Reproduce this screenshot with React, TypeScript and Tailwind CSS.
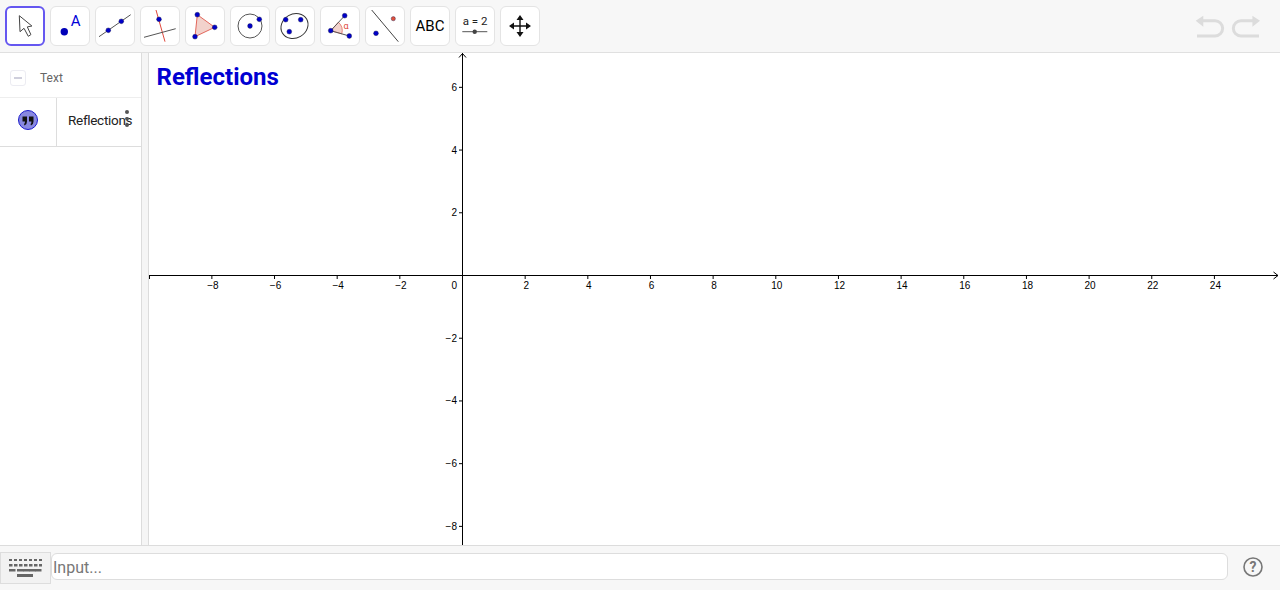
const XTICKS = [-8, -6, -4, -2, 2, 4, 6, 8, 10, 12, 14, 16, 18, 20, 22, 24];
const YTICKS = [6, 4, 2, -2, -4, -6, -8];

const sx = (v: number) => 313.5 + v * 31.33;
const sy = (v: number) => 222.5 - v * 31.36;
const label = (v: number) => (v < 0 ? `\u2212${-v}` : `${v}`);

function Dot({ x, y, r = 2.4, fill = '#0000c8' }: { x: number; y: number; r?: number; fill?: string }) {
  return <circle cx={x} cy={y} r={r} fill={fill} stroke="#1a1a4a" strokeWidth="0.4" />;
}

const ICONS = [
  <path d="M14.3 9.7 L15 25.7 L19 22.3 L23.3 30.3 L25.9 28.6 L22.3 20.9 L26.9 20 Z" fill="#fff" stroke="#444" strokeWidth="1" strokeLinejoin="round" />,
  <>
    <circle cx="14.3" cy="25.7" r="3.7" fill="#0000b8" />
    <text x="25.7" y="20" textAnchor="middle" fontSize="15" fill="#0000d8" fontFamily="Roboto, sans-serif">A</text>
  </>,
  <>
    <line x1="4" y1="30.7" x2="35.7" y2="8.7" stroke="#555" strokeWidth="1" />
    <Dot x={13.3} y={24.3} />
    <Dot x={26.3} y={15.3} />
  </>,
  <>
    <line x1="16" y1="4" x2="25" y2="35.7" stroke="#e0483c" strokeWidth="1" />
    <line x1="4" y1="31.3" x2="35.7" y2="22.7" stroke="#555" strokeWidth="1" />
    <Dot x={19} y={13.3} />
  </>,
  <>
    <polygon points="12.3,8.7 29.7,21.3 10,30.7" fill="#f2d2cc" stroke="#e0584c" strokeWidth="0.9" />
    <Dot x={12.3} y={8.7} />
    <Dot x={29.7} y={21.3} />
    <Dot x={10} y={30.7} />
  </>,
  <>
    <circle cx="20" cy="20" r="12" fill="none" stroke="#555" strokeWidth="1" />
    <Dot x={20} y={20} />
    <Dot x={29.3} y={13.3} />
  </>,
  <>
    <ellipse cx="19.5" cy="20" rx="14" ry="12" fill="none" stroke="#333" strokeWidth="1" transform="rotate(-30 19.5 20)" />
    <Dot x={10.7} y={13.7} />
    <Dot x={25.7} y={13.7} />
    <Dot x={14.3} y={25.7} />
  </>,
  <>
    <path d="M10.7 24.7 L18.4 16.2 A11.5 11.5 0 0 1 21.8 27.8 Z" fill="#f2d2cc" stroke="#e0584c" strokeWidth="0.7" />
    <line x1="10.7" y1="24.7" x2="24.7" y2="9.7" stroke="#555" strokeWidth="1" />
    <line x1="10.7" y1="24.7" x2="29.3" y2="30" stroke="#555" strokeWidth="1" />
    <text x="26" y="22.5" textAnchor="middle" fontSize="9" fill="#e0483c" fontFamily="Roboto, sans-serif">α</text>
    <Dot x={10.7} y={24.7} />
    <Dot x={24.7} y={9.7} />
    <Dot x={29.3} y={30} />
  </>,
  <>
    <line x1="6.7" y1="4" x2="33.3" y2="35.7" stroke="#444" strokeWidth="1" />
    <Dot x={28.3} y={12.7} r={2.1} fill="#e0503c" />
    <Dot x={11} y={27.3} />
  </>,
  <text x="20" y="25" textAnchor="middle" fontSize="15" fill="#000" fontFamily="Roboto, sans-serif">ABC</text>,
  <>
    <text x="20" y="19.3" textAnchor="middle" fontSize="11.5" fill="#222" fontFamily="Roboto, sans-serif">a = 2</text>
    <line x1="7.3" y1="25.7" x2="32.3" y2="25.7" stroke="#555" strokeWidth="1" />
    <circle cx="19.7" cy="25.7" r="2.2" fill="#444" />
  </>,
  <>
    <path d="M20 12 V28 M12 20 H28" stroke="#111" strokeWidth="1.4" />
    <path d="M20 9 L23.5 14 H16.5 Z M20 31 L23.5 26 H16.5 Z M9 20 L14 16.5 V23.5 Z M31 20 L26 16.5 V23.5 Z" fill="#111" />
  </>,
];

function Toolbar() {
  return (
    <div className="flex h-[53px] shrink-0 items-start justify-between border-b border-[#e0e0e0] bg-[#f7f7f7] pl-[5px] pt-[6px]">
      <div className="flex gap-[5px]">
        {ICONS.map((icon, i) => (
          <button
            key={i}
            className={
              i === 0
                ? 'size-10 rounded-[6px] border-2 border-[#6557f0] bg-white'
                : 'size-10 rounded-[6px] border border-[#e4e4e4] bg-white'
            }
          >
            <svg viewBox={i === 0 ? '2 2 36 36' : '1 1 38 38'} className="size-full">
              {icon}
            </svg>
          </button>
        ))}
      </div>
      <svg width="70" height="30" viewBox="0 0 70 30" className="mr-[16px] mt-[7px]" fill="none">
        <path d="M1.7 7.7 L9.3 2.7 V13.7 Z M66 7.7 L58.4 2.7 V13.7 Z" fill="#dcdcdc" />
        <path d="M9 7.7 H21 A7.5 7.5 0 0 1 21 23 H3 M59 7.7 H47 A7.5 7.5 0 0 0 47 23 H65" stroke="#dcdcdc" strokeWidth="3" />
      </svg>
    </div>
  );
}

function Sidebar() {
  return (
    <div className="w-[142px] shrink-0 border-r border-[#dcdcdc] bg-white">
      <div className="flex h-[45px] items-center border-b border-[#eeeeee] pl-[10px] pt-[5px]">
        <span className="flex size-[16px] items-center justify-center rounded-[3px] border border-[#ececf2]">
          <span className="h-[2px] w-[8px] bg-[#cfcfdc]" />
        </span>
        <span className="ml-[14px] text-[12px] text-[#666]">Text</span>
      </div>
      <div className="relative flex h-[49px] border-b border-[#dddddd]">
        <div className="flex w-[57px] items-center justify-center border-r border-[#dddddd] pb-[4px]">
          <svg width="22" height="22" viewBox="0 0 22 22">
            <circle cx="11" cy="11" r="9.5" fill="#8888e0" stroke="#1a1acc" strokeWidth="1" />
            <path d="M5.5 7.5 H10 V12.5 Q10 15.5 7.5 16.5 L7 15 Q8 14.5 8 12.5 H5.5 Z M12 7.5 H16.5 V12.5 Q16.5 15.5 14 16.5 L13.5 15 Q14.5 14.5 14.5 12.5 H12 Z" fill="#111" />
          </svg>
        </div>
        <div className="flex w-[76px] items-center overflow-hidden pb-[4px] pl-[11px] text-[13.5px] tracking-[-0.3px] text-[#222] whitespace-nowrap">
          Reflections
        </div>
        <div className="absolute left-[125px] top-[12px] flex flex-col gap-[3px]">
          {[0, 1, 2].map((d) => (
            <span key={d} className="block size-[3.5px] rounded-full bg-[#555]" />
          ))}
        </div>
      </div>
    </div>
  );
}

function Graph() {
  return (
    <svg viewBox="0 0 1130 492" className="block h-full w-[1130px]" fontFamily="'Liberation Sans', Arial, sans-serif">
      <text x="7.5" y="32" fontSize="24" fontWeight="700" fill="#0000d2" fontFamily="Roboto, sans-serif">Reflections</text>

      <line x1="0" y1="222.5" x2="1129" y2="222.5" stroke="#000" />
      <line x1="313.5" y1="0" x2="313.5" y2="492" stroke="#000" />
      <path d="M1124.5 219 L1129 222.5 L1124.5 226 M310 4.5 L313.5 0.5 L317 4.5 M0.5 222.5 V226" fill="none" stroke="#000" />

      {XTICKS.map((v) => (
        <g key={v}>
          <line x1={sx(v)} y1="222.5" x2={sx(v)} y2="226" stroke="#000" />
          <text x={sx(v) + 1} y="236" fontSize="10" textAnchor="middle" fill="#000">{label(v)}</text>
        </g>
      ))}
      {YTICKS.map((v) => (
        <g key={v}>
          <line x1="310" y1={sy(v)} x2="313.5" y2={sy(v)} stroke="#000" />
          <text x="308" y={sy(v) + 3.5} fontSize="10" textAnchor="end" fill="#000">{label(v)}</text>
        </g>
      ))}
      <text x="308" y="236" fontSize="10" textAnchor="end" fill="#000">0</text>
    </svg>
  );
}

function Keyboard() {
  const rows = [
    { y: 0, h: 2, xs: [0, 5, 10, 15, 20, 25, 30], w: 3 },
    { y: 5, h: 2.5, xs: [0, 5, 10, 15, 20, 25, 30], w: 3.5 },
    { y: 10, h: 2.5, xs: [0, 8, 14, 20, 26], w: 6.5 },
  ];
  return (
    <svg width="33" height="18" viewBox="0 0 33 18">
      {rows.map((row) => row.xs.map((x) => <rect key={`${row.y}-${x}`} x={x} y={row.y} width={row.w} height={row.h} fill="#666" />))}
      <rect x="8" y="15" width="16" height="3" fill="#666" />
    </svg>
  );
}

function InputBar() {
  return (
    <div className="flex h-[45px] shrink-0 items-start border-t border-[#dcdcdc] bg-[#f7f7f7] pt-[6px]">
      <div className="flex h-[32px] w-[51px] shrink-0 items-center justify-center border border-[#dddddd] bg-[#f2f2f2]">
        <Keyboard />
      </div>
      <div className="mt-[1px] flex h-[27px] w-[1177px] items-center rounded-[6px] border border-[#dddddd] bg-white pl-[1px] pt-[2px] text-[16px] text-[#777]">
        Input...
      </div>
      <svg width="20" height="20" viewBox="0 0 20 20" className="ml-[15px] mt-[5px]">
        <circle cx="10" cy="10" r="9" fill="none" stroke="#777" strokeWidth="1.6" />
        <text x="10" y="15" textAnchor="middle" fontSize="14" fontWeight="700" fill="#777" fontFamily="Roboto, sans-serif">?</text>
      </svg>
    </div>
  );
}

export default function App() {
  return (
    <div className="flex h-[590px] w-[1280px] flex-col overflow-hidden bg-white font-['Roboto',sans-serif]">
      <Toolbar />
      <div className="flex min-h-0 flex-1">
        <Sidebar />
        <div className="w-[7px] shrink-0 border-r border-[#dcdcdc] bg-[#f5f5f5]" />
        <div className="min-w-0 flex-1 overflow-hidden">
          <Graph />
        </div>
      </div>
      <InputBar />
    </div>
  );
}
